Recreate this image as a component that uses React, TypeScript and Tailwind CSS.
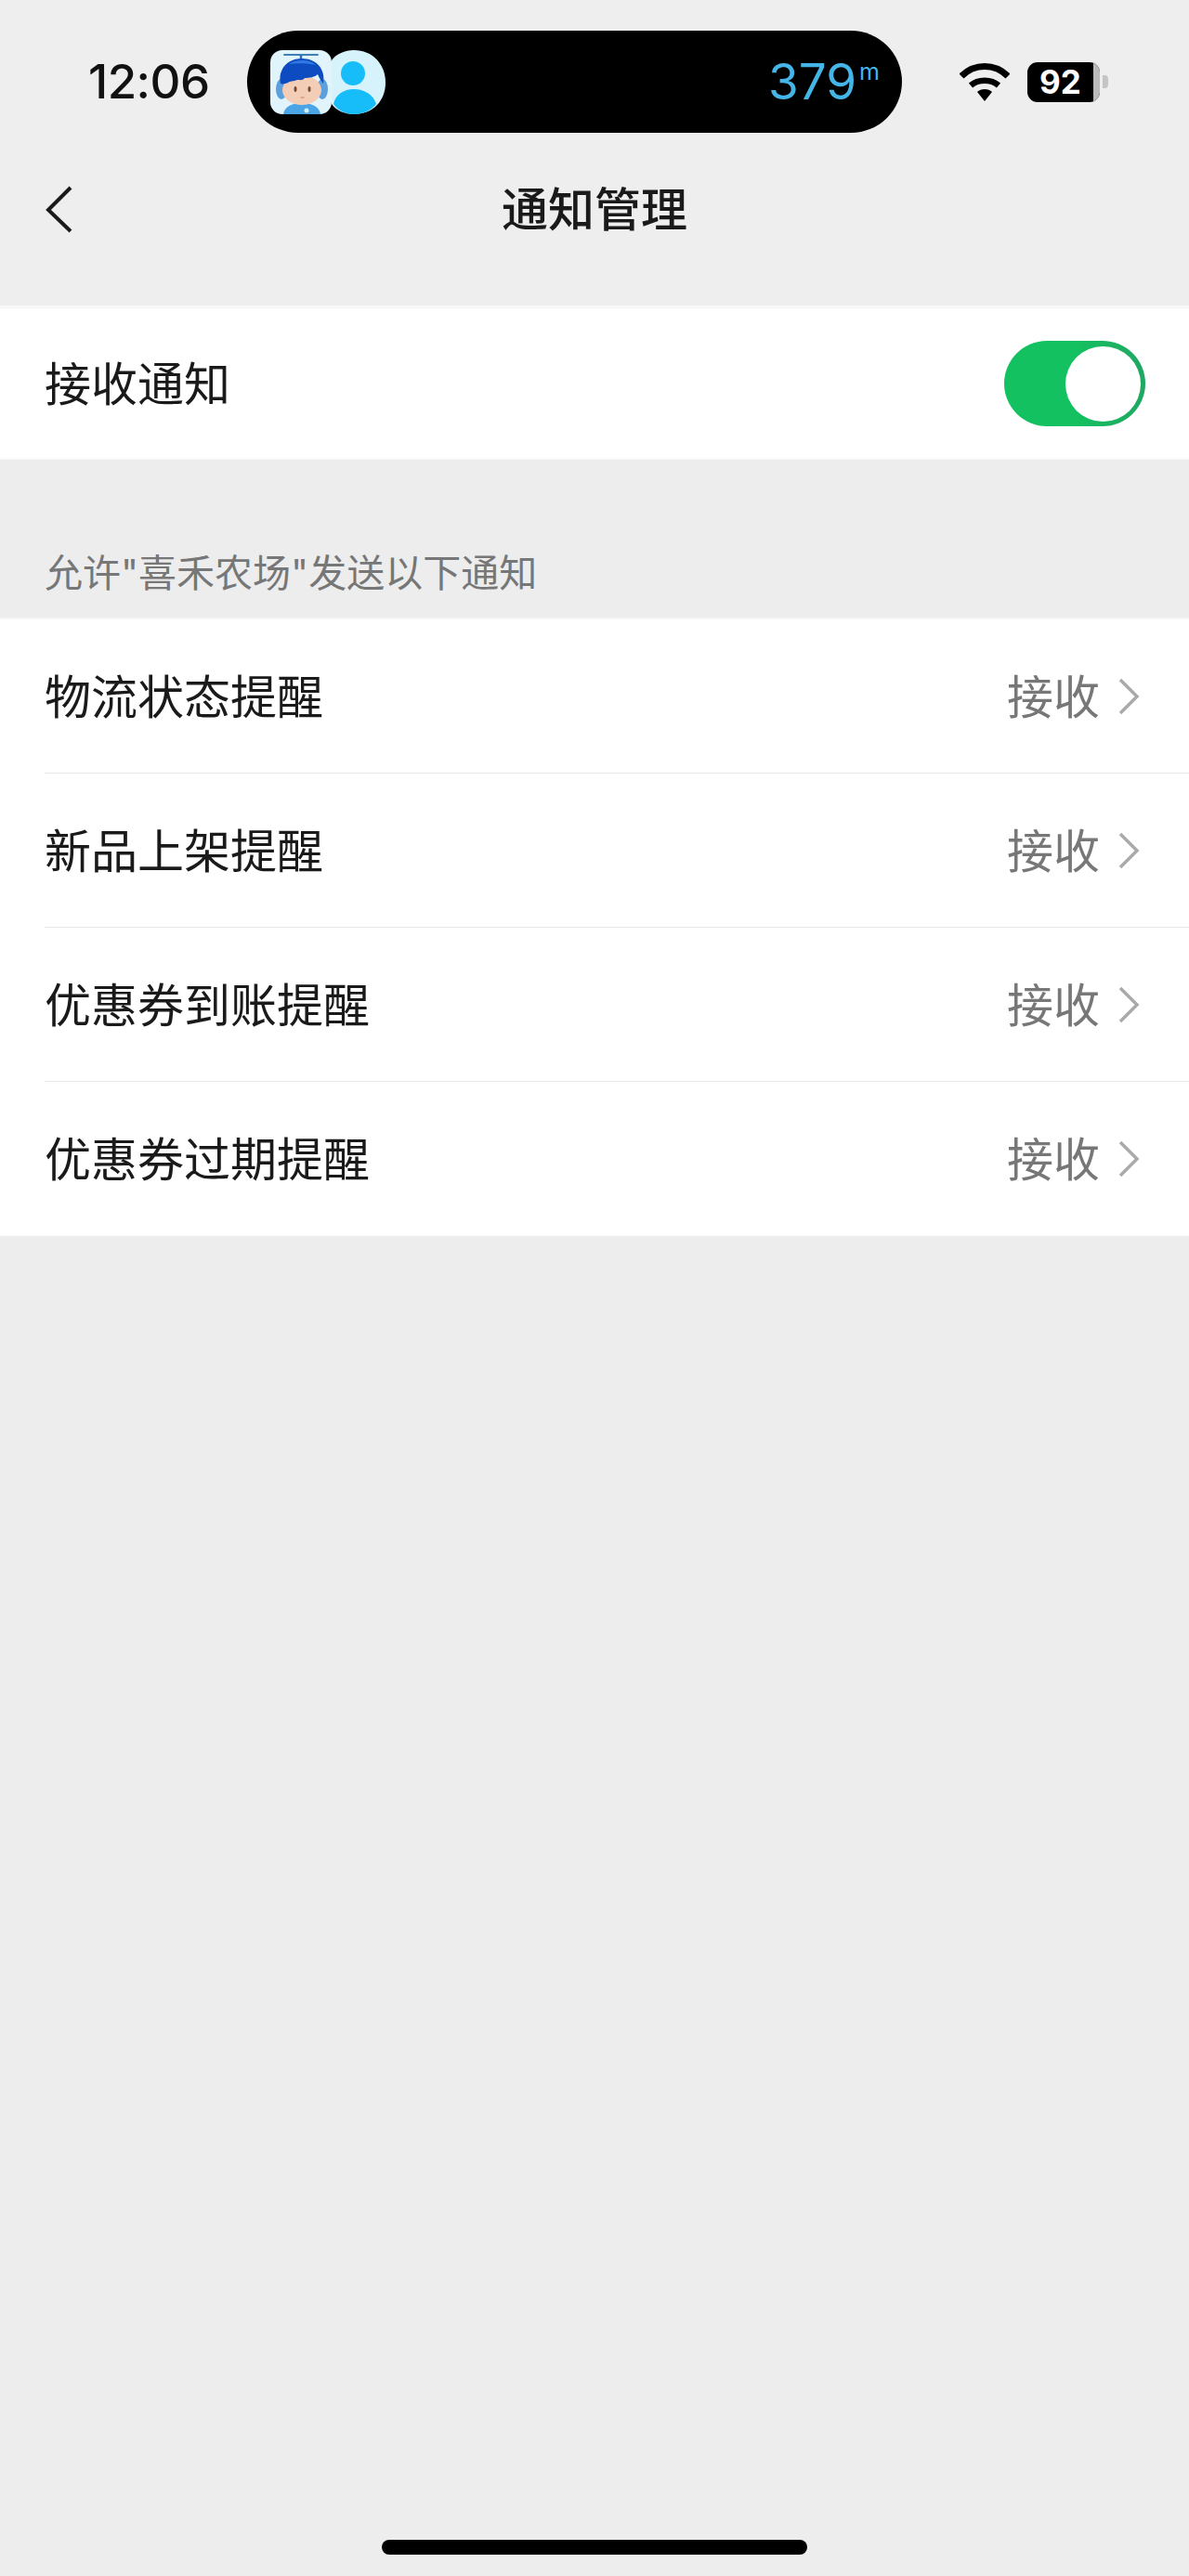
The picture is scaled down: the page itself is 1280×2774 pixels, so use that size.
const CJK = "font-['Inter','Noto_Sans_CJK_SC',sans-serif]";

const items = ["物流状态提醒", "新品上架提醒", "优惠券到账提醒", "优惠券过期提醒"];

function MascotIcon() {
  return (
    <svg width="66" height="69" viewBox="0 0 66 69" className="block">
      <rect width="66" height="69" rx="13" fill="#e2f4fb" />
      <path d="M15 5h36" stroke="#3f7fb8" strokeWidth="2" strokeLinecap="round" />
      <path d="M33 5v6" stroke="#2a6fc0" strokeWidth="2.5" />
      <path d="M14 69c1-8 9-12 20-12s19 4 20 12z" fill="#4ba4e6" />
      <circle cx="39" cy="65" r="2.5" fill="#d4eefb" />
      <ellipse cx="12" cy="42" rx="6" ry="11" fill="#5b9fdc" />
      <ellipse cx="56" cy="42" rx="6" ry="11" fill="#5b9fdc" />
      <ellipse cx="34" cy="43" rx="21" ry="16" fill="#f3cdb6" />
      <path d="M11 36C8 20 19 9 34 9s26 11 23 27c-2-3-4-5-6-10-3 3-9 4-14 4-2 3-5 2-8 2-4 2-8 1-10 3-2 1-6 2-8 1z" fill="#0c4cc0" />
      <path d="M20 15c4-3 9-4 14-4s11 1 15 5c-9-2-20-2-29-1z" fill="#2f78e0" />
      <ellipse cx="27" cy="42" rx="1.5" ry="3" fill="#7b4a32" />
      <ellipse cx="42" cy="42" rx="1.5" ry="3" fill="#7b4a32" />
      <path d="M33 51h3" stroke="#d89a86" strokeWidth="1.5" strokeLinecap="round" />
    </svg>
  );
}

function PersonIcon() {
  return (
    <svg width="58" height="69" viewBox="0 0 58 69" className="block">
      <path d="M0 11C5 4 14 0 24 0c20 0 34 15 34 35S44 69 24 69C14 69 5 65 0 58z" fill="#d6f3fc" />
      <circle cx="23" cy="25" r="13" fill="#17bdf8" />
      <path d="M2 58c2-10 11-16 22-16s21 6 24 16c-6 7-14 11-24 11-9 0-17-4-22-11z" fill="#17bdf8" />
    </svg>
  );
}

function Chevron() {
  return (
    <svg width="24" height="42" viewBox="0 0 24 42" fill="none" className="block">
      <path d="M3 3l18 18L3 39" stroke="#aaaaaa" strokeWidth="3.5" />
    </svg>
  );
}

export default function App() {
  return (
    <div className={`${CJK} w-[1280px] h-[2774px] bg-[#ededed] flex flex-col text-[#1a1a1a]`}>
      <div className="bg-[#eeeeef]">
        {/* status bar */}
        <div className="flex items-center pt-[33px] h-[143px]">
          <div className="w-[266px] pl-[95px] pb-[2px] text-[51px] font-medium leading-none tracking-[-0.5px] text-[#111]">12:06</div>
          <div className="w-[705px] h-[110px] bg-black rounded-[55px] flex items-center pl-[25px] pr-[24px]">
            <MascotIcon />
            <PersonIcon />
            <div className="ml-auto flex items-start text-[#45b4e6]">
              <span className="text-[53px] leading-none font-normal">379</span>
              <span className="text-[25px] leading-none ml-[3px] mt-[3px]">m</span>
            </div>
          </div>
          <svg width="54" height="42" viewBox="0 0 54 42" className="ml-[62px] block">
            <path d="M27 42l-8-10c4-4 12-4 16 0z" fill="#000" />
            <path d="M2 15C16 1 38 1 52 15" fill="none" stroke="#000" strokeWidth="7" />
            <path d="M12 25c8-7 22-7 30 0" fill="none" stroke="#000" strokeWidth="6.5" />
          </svg>
          <div className="ml-[19px] w-[78px] h-[43px] bg-black rounded-[11px] overflow-hidden flex">
            <div className="flex-1 flex items-center justify-center text-white text-[35px] font-bold leading-none">92</div>
            <div className="w-[7px] bg-[#bbbbbb]" />
          </div>
          <div className="ml-[3px] w-[6px] h-[14px] bg-[#c4c4c4] rounded-r-[4px]" />
        </div>
        {/* nav */}
        <div className="relative h-[186px] pb-[20px] flex items-center justify-center">
          <svg width="32" height="52" viewBox="0 0 32 52" fill="none" className="absolute left-[48px] top-[56px]">
            <path d="M28 3L4 27l24 23" stroke="#1a1a1a" strokeWidth="4" />
          </svg>
          <h1 className="text-[50px] leading-none font-medium">通知管理</h1>
        </div>
      </div>

      <div className="bg-white h-[166px] border-t-[4px] border-b-[2px] border-[#f8f8f8] flex items-center justify-between pl-[48px] pr-[47px]">
        <span className="text-[50px] leading-none pt-[2px]">接收通知</span>
        <div className="w-[152px] h-[92px] rounded-full bg-linear-to-r from-[#13c160] from-50% to-[#1fa763] flex items-center justify-end pr-[5px]">
          <div className="w-[81px] h-[81px] rounded-full bg-white" />
        </div>
      </div>

      <div className="h-[170px] flex items-end pl-[48px] pb-[22px] text-[#777777] text-[41px] leading-[52px]">
        允许"喜禾农场"发送以下通知
      </div>

      <div className="bg-white border-t-[2px] border-[#f5f5f5]">
        {items.map((name, i) => (
          <div key={name} className="pl-[48px]">
            <div className={`h-[166px] flex items-center justify-between pr-[53px] ${i < 3 ? "border-b border-[#e8e8e8]" : ""}`}>
              <span className="text-[50px] leading-none pt-[2px]">{name}</span>
              <div className="flex items-center gap-[19px]">
                <span className="text-[50px] leading-none pt-[2px] text-[#777777]">接收</span>
                <Chevron />
              </div>
            </div>
          </div>
        ))}
      </div>

      <div className="flex-1 flex flex-col justify-end items-center pb-[23px]">
        <div className="w-[458px] h-[16px] rounded-full bg-black" />
      </div>
    </div>
  );
}
